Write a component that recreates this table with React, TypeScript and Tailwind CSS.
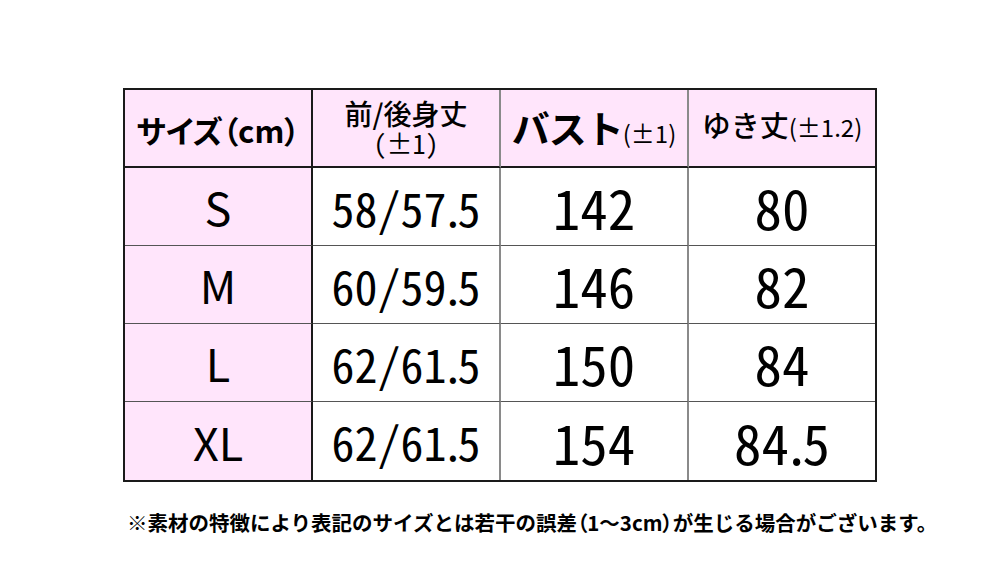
import React from 'react';

const jp = "font-['Noto_Sans_CJK_JP','Noto_Sans_CJK_SC',sans-serif]";
const half = "[font-feature-settings:'hwid']";

const rows = [
  { size: 'S', length: '58/57.5', bust: '142', sleeve: '80' },
  { size: 'M', length: '60/59.5', bust: '146', sleeve: '82' },
  { size: 'L', length: '62/61.5', bust: '150', sleeve: '84' },
  { size: 'XL', length: '62/61.5', bust: '154', sleeve: '84.5' },
];

// digits drawn half-width, the dot kept narrow
const Num: React.FC<{ value: string; className: string }> = ({ value, className }) => (
  <span className={`${className} leading-none`}>
    {value.split('.').map((part, i) => (
      <React.Fragment key={i}>
        {i > 0 && <span className="tracking-[-2px]">.</span>}
        <span className={half}>{part}</span>
      </React.Fragment>
    ))}
  </span>
);

const App: React.FC = () => {
  return (
    <div className={`w-[1000px] h-[566px] bg-white text-black ${jp}`}>
      <div className="w-[754px] mx-auto pt-[88px]">
        <div className="border-2 border-[#1a1a1a] grid grid-cols-[188px_188px_188px_186px]">
          {/* header */}
          <div className="h-[78px] bg-[#ffe5fb] border-r-2 border-b-2 border-[#1a1a1a] flex items-center justify-center pt-0.5">
            <span className="text-[31px] font-bold leading-none [font-feature-settings:'palt']">サイズ（cm）</span>
          </div>
          <div className="h-[78px] bg-[#ffe5fb] border-r-2 border-r-[#8a8a8a] border-b-2 border-b-[#1a1a1a] flex flex-col items-center justify-center gap-[2px] pb-[3px]">
            <span className="block text-[28px] font-medium leading-[30px] [font-feature-settings:'palt']">前/後身丈</span>
            <span className={`block text-[26px] leading-[26px] ${half}`}>（±1）</span>
          </div>
          <div className="h-[78px] bg-[#ffe5fb] border-r-2 border-r-[#8a8a8a] border-b-2 border-b-[#1a1a1a] flex items-baseline justify-center pt-[18px]">
            <span className="text-[38px] font-bold leading-none tracking-[-1px]">バスト</span>
            <span className="text-[24px] leading-none">(±1)</span>
          </div>
          <div className="h-[78px] bg-[#ffe5fb] border-b-2 border-[#1a1a1a] flex items-baseline justify-center pt-[20px]">
            <span className="text-[29px] font-medium leading-none">ゆき丈</span>
            <span className="text-[24px] leading-none">(±1.2)</span>
          </div>

          {rows.map((r, i) => {
            const last = i === rows.length - 1;
            const bb = last ? '' : 'border-b border-b-[#555]';
            return (
              <React.Fragment key={r.size}>
                <div className={`h-[78px] bg-[#ffe5fb] border-r-2 border-r-[#1a1a1a] ${bb} flex items-center justify-center`}>
                  <span className="text-[45px] leading-none">{r.size}</span>
                </div>
                <div className={`h-[78px] border-r-2 border-r-[#8a8a8a] ${bb} flex items-center justify-center`}>
                  <Num value={r.length} className="text-[46px]" />
                </div>
                <div className={`h-[78px] border-r-2 border-r-[#8a8a8a] ${bb} flex items-center justify-center`}>
                  <Num value={r.bust} className="text-[55px]" />
                </div>
                <div className={`h-[78px] ${bb} flex items-center justify-center`}>
                  <Num value={r.sleeve} className="text-[55px]" />
                </div>
              </React.Fragment>
            );
          })}
        </div>
        <p className="mt-[30px] ml-[4px] text-[20.5px] font-bold leading-none whitespace-nowrap">
          ※素材の特徴により表記のサイズとは若干の誤差<span className="[font-feature-settings:'palt']">（</span>1～3cm<span className="[font-feature-settings:'palt']">）</span>が生じる場合がございます。
        </p>
      </div>
    </div>
  );
};

export default App;
